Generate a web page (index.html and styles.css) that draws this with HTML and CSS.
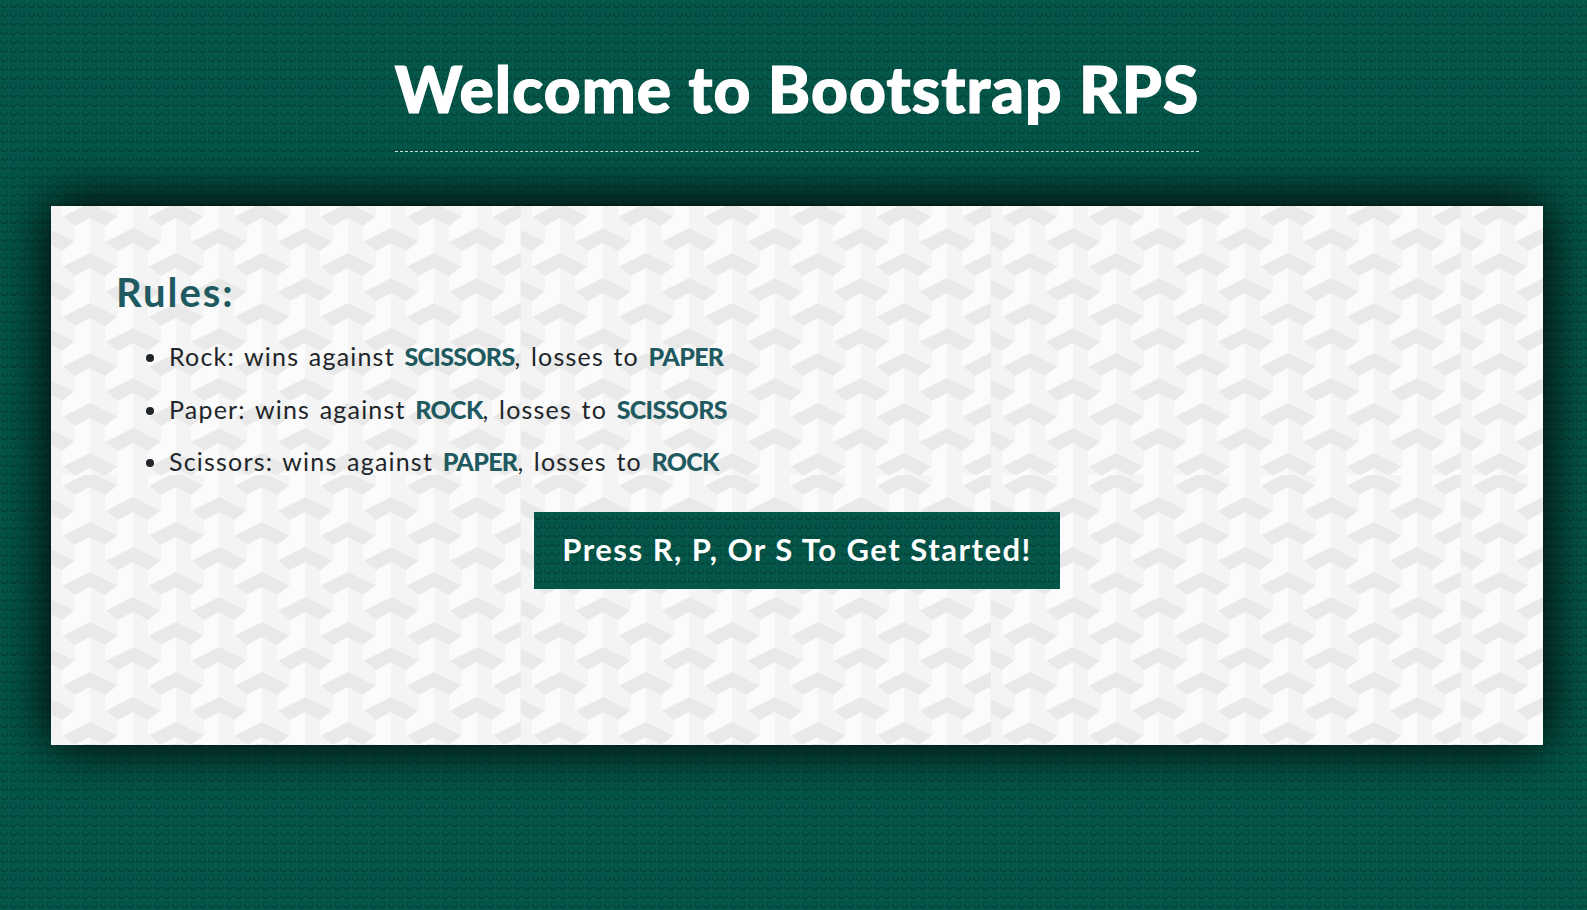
FILE: index.html
```html
<!DOCTYPE html>
<html lang="en">
<head>
    <meta charset="UTF-8">
    <title>Bootstrap RPS</title>
    <link rel="stylesheet" href="styles.css">
</head>
<body>
    <header class="top">
        <h1 class="title">Welcome to Bootstrap RPS</h1>
    </header>

    <main class="card">
        <h2 class="rules-title">Rules:</h2>
        <ul class="rules">
            <li>Rock: wins against <strong>SCISSORS</strong>, losses to <strong>PAPER</strong></li>
            <li>Paper: wins against <strong>ROCK</strong>, losses to <strong>SCISSORS</strong></li>
            <li>Scissors: wins against <strong>PAPER</strong>, losses to <strong>ROCK</strong></li>
        </ul>
        <div class="start">
            <button class="start-btn" type="button">Press R, P, Or S To Get Started!</button>
        </div>
    </main>
</body>
</html>
```

FILE: styles.css
```css
html, body { height: 100%; }
body {
    margin: 0;
    padding: 0 44px 0 51px;
    box-sizing: border-box;
    overflow: hidden;
    font-family: "Lato", "Noto Sans", sans-serif;
    color: #212529;
    background-color: #04574a;
    background-image: url("data:image/svg+xml,%3Csvg xmlns='http://www.w3.org/2000/svg' width='9' height='9'%3E%3Cpath d='M1.5 4.5a3 3 0 0 0 6 0' fill='none' stroke='%23023f34' stroke-width='1.1'/%3E%3Cpath d='M1.5 4.5a3 3 0 0 1 6 0' fill='none' stroke='%23034e42' stroke-width='.7'/%3E%3C/svg%3E");
}
.top {
    display: flex;
    justify-content: center;
    padding-top: 53px;
}
.title {
    margin: 0;
    padding-bottom: 26px;
    border-bottom: 1px dashed #cfe0dc;
    color: #fff;
    font-size: 64px;
    font-weight: 900;
    line-height: 72px;
    letter-spacing: 1.1px;
    -webkit-text-stroke: 1.2px #fff;
}
.card {
    margin-top: 54px;
    height: 539px;
    box-sizing: border-box;
    padding: 61px 65px 0;
    background-color: #f4f4f4;
    background-image: url("data:image/svg+xml,%3Csvg xmlns='http://www.w3.org/2000/svg' width='470' height='269'%3E%3Cdefs%3E%3Cg id='c'%3E%3Cpath fill='%23e9e9e9' d='M0 0l27 13.5-12 9.5-15-8-15 8-12-9.5z'/%3E%3Cpath fill='%23fbfbfb' d='M0 15l-15 8v15.500l-13 9.500v16l28-14z'/%3E%3C/g%3E%3Cpattern id='p' width='86' height='50' patternUnits='userSpaceOnUse' x='39' y='-3'%3E%3Cuse href='%23c' x='0' y='0'/%3E%3Cuse href='%23c' x='86' y='0'/%3E%3Cuse href='%23c' x='0' y='-50'/%3E%3Cuse href='%23c' x='86' y='-50'/%3E%3Cuse href='%23c' x='43' y='25'/%3E%3Cuse href='%23c' x='43' y='-25'/%3E%3C/pattern%3E%3C/defs%3E%3Crect width='470' height='269' fill='url(%23p)'/%3E%3C/svg%3E");
    box-shadow: 0 -2px 50px 4px #000;
}
.rules-title {
    margin: 0 0 22px;
    color: #1f5a60;
    font-size: 40px;
    font-weight: 700;
    line-height: 50px;
    letter-spacing: 2px;
}
.rules {
    margin: 0;
    padding-left: 53px;
    font-size: 25px;
    line-height: 34px;
    letter-spacing: 1.2px;
    word-spacing: 2px;
}
.rules li { margin-bottom: 18.7px; }
.rules strong { color: #1f5a60; font-weight: 900; letter-spacing: -0.7px; }
.start {
    display: flex;
    justify-content: center;
    margin-top: 34px;
}
.start-btn {
    padding: 0 27px 4px;
    width: 526px;
    height: 77px;
    border: 0;
    color: #fff;
    font-family: inherit;
    font-size: 31px;
    font-weight: 700;
    letter-spacing: 1.5px;
    background-color: #04574a;
    background-image: url("data:image/svg+xml,%3Csvg xmlns='http://www.w3.org/2000/svg' width='9' height='9'%3E%3Cpath d='M1.5 4.500a3 3 0 0 0 6 0' fill='none' stroke='%23023f34' stroke-width='1.1'/%3E%3Cpath d='M1.5 4.500a3 3 0 0 1 6 0' fill='none' stroke='%23034e42' stroke-width='.7'/%3E%3C/svg%3E");
}
```
